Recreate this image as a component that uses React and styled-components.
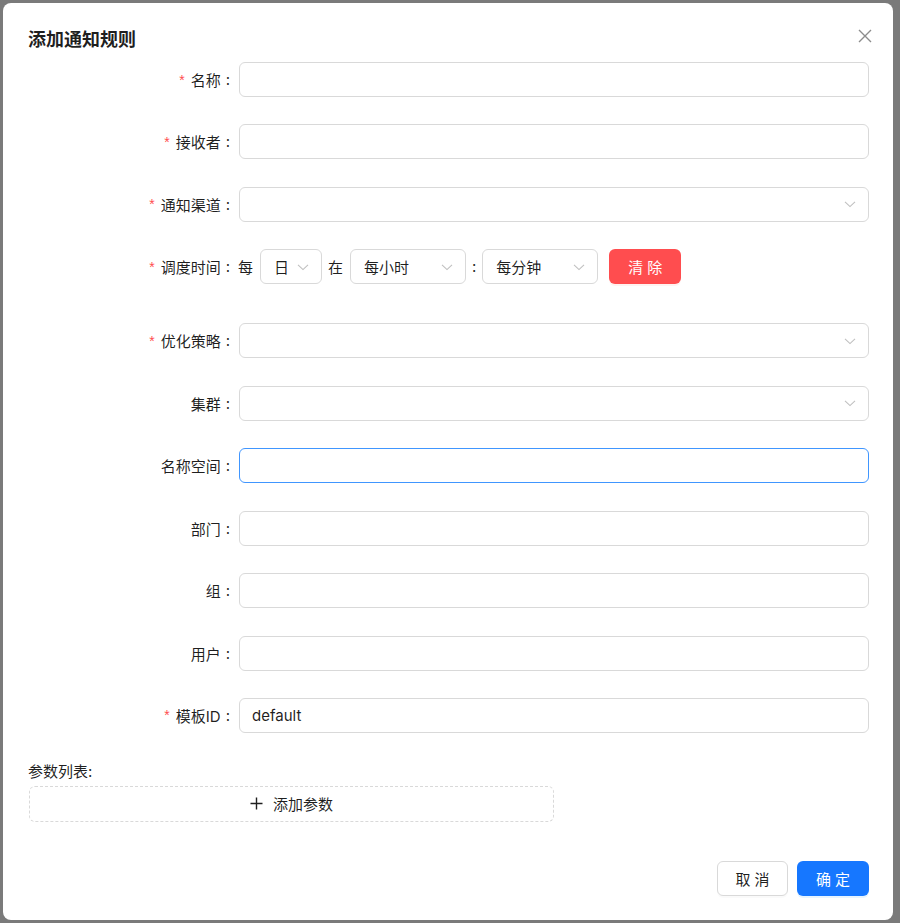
import styled, { createGlobalStyle } from 'styled-components';

const GlobalStyle = createGlobalStyle`
  html, body {
    margin: 0;
    padding: 0;
    background: #7a7a7a;
  }
  * {
    box-sizing: border-box;
  }
  body {
    font-family: "Inter", "Noto Sans CJK SC", sans-serif;
    font-size: 15px;
    color: rgba(0, 0, 0, 0.88);
  }
`;

const Backdrop = styled.div`
  width: 900px;
  height: 923px;
  padding: 3px 7px 3px 3px;
`;

const Modal = styled.div`
  position: relative;
  width: 890px;
  height: 917px;
  background: #fff;
  border-radius: 8px;
  padding: 24px 24px 24px 25px;
  display: flex;
  flex-direction: column;
`;

const Title = styled.h2`
  margin: 0 0 9px;
  font-size: 18px;
  line-height: 26px;
  font-weight: 700;
  color: rgba(0, 0, 0, 0.88);
`;

const Close = styled.button`
  position: absolute;
  top: 22px;
  right: 17px;
  width: 22px;
  height: 22px;
  padding: 0;
  border: none;
  background: transparent;
  display: flex;
  align-items: center;
  justify-content: center;
  color: rgba(0, 0, 0, 0.45);
`;

const Row = styled.div`
  display: flex;
  align-items: center;
  height: 35px;
  margin-bottom: ${p => p.$gap ?? 27.45}px;
`;

const Label = styled.label`
  width: 211px;
  flex-shrink: 0;
  display: flex;
  justify-content: flex-end;
  align-items: center;
  padding-right: 9px;
  white-space: nowrap;

  &::after {
    content: ":";
    margin-left: 5px;
  }
`;

const Star = styled.span`
  color: #ff4d4f;
  margin-right: 6px;
  font-size: 14px;
  font-family: "Liberation Sans", sans-serif;
`;

const Input = styled.div`
  flex: 1;
  height: 35px;
  border: 1px solid ${p => (p.$focus ? '#4096ff' : '#d9d9d9')};
  border-radius: 6px;
  padding: 0 12px;
  display: flex;
  align-items: center;
  background: #fff;
`;

const Select = styled.div`
  flex: ${p => (p.$width ? '0 0 auto' : 1)};
  width: ${p => (p.$width ? `${p.$width}px` : 'auto')};
  height: 35px;
  border: 1px solid #d9d9d9;
  border-radius: 6px;
  padding: 0 12px 0 13px;
  display: flex;
  align-items: center;
  justify-content: space-between;
  color: rgba(0, 0, 0, 0.88);
`;

const Arrow = styled.span`
  display: flex;
  color: rgba(0, 0, 0, 0.25);
`;

const Word = styled.span`
  margin: 0 ${p => p.$right ?? 6}px 0 ${p => p.$left ?? 6}px;
`;

const Button = styled.button`
  height: 35px;
  width: ${p => p.$width}px;
  border-radius: 6px;
  font-family: inherit;
  font-size: 15px;
  letter-spacing: 4px;
  text-indent: 4px;
  cursor: pointer;
  border: 1px solid ${p => (p.$kind === 'default' ? '#d9d9d9' : 'transparent')};
  background: ${p => (p.$kind === 'danger' ? '#ff4d4f' : p.$kind === 'primary' ? '#1677ff' : '#fff')};
  color: ${p => (p.$kind === 'default' ? 'rgba(0,0,0,0.88)' : '#fff')};
  box-shadow: ${p =>
    p.$kind === 'danger'
      ? '0 2px 0 rgba(255, 38, 5, 0.06)'
      : p.$kind === 'primary'
      ? '0 2px 0 rgba(5, 145, 255, 0.1)'
      : '0 2px 0 rgba(0, 0, 0, 0.02)'};
`;

const ParamLabel = styled.div`
  line-height: 22px;
  margin-bottom: 3px;
`;

const AddButton = styled.button`
  width: 525px;
  margin-left: 1px;
  height: 36px;
  border: 1px dashed #d9d9d9;
  border-radius: 6px;
  background: #fff;
  font-family: inherit;
  font-size: 15px;
  color: rgba(0, 0, 0, 0.88);
  display: flex;
  align-items: center;
  justify-content: center;
  gap: 10px;
`;

const Footer = styled.div`
  margin-top: auto;
  display: flex;
  justify-content: flex-end;
  gap: 9px;
`;

const Chevron = () => (
  <Arrow>
    <svg width="12" height="12" viewBox="0 0 12 12" fill="none">
      <path d="M1 3.8 L6 8.6 L11 3.8" stroke="currentColor" strokeWidth="1.1" />
    </svg>
  </Arrow>
);

const Field = ({ label, required, children, gap }) => (
  <Row $gap={gap}>
    <Label>
      {required && <Star>*</Star>}
      {label}
    </Label>
    {children}
  </Row>
);

const App = () => {
  return (
    <>
      <GlobalStyle />
      <Backdrop>
        <Modal>
          <Title>添加通知规则</Title>
          <Close>
            <svg width="14" height="14" viewBox="0 0 14 14" fill="none">
              <path d="M1 1 L13 13 M13 1 L1 13" stroke="currentColor" strokeWidth="1.4" />
            </svg>
          </Close>

          <Field label="名称" required><Input /></Field>
          <Field label="接收者" required><Input /></Field>
          <Field label="通知渠道" required>
            <Select><span /><Chevron /></Select>
          </Field>
          <Field label="调度时间" required gap={39}>
            <Word $left={-1} $right={7}>每</Word>
            <Select $width={62}><span>日</span><Chevron /></Select>
            <Word $left={6} $right={7}>在</Word>
            <Select $width={116}><span>每小时</span><Chevron /></Select>
            <Word $left={6} $right={6}>:</Word>
            <Select $width={116}><span>每分钟</span><Chevron /></Select>
            <Button $kind="danger" $width={72} style={{ marginLeft: 11 }}>清除</Button>
          </Field>
          <Field label="优化策略" required>
            <Select><span /><Chevron /></Select>
          </Field>
          <Field label="集群">
            <Select><span /><Chevron /></Select>
          </Field>
          <Field label="名称空间"><Input $focus /></Field>
          <Field label="部门"><Input /></Field>
          <Field label="组"><Input /></Field>
          <Field label="用户"><Input /></Field>
          <Field label="模板ID" required gap={28}><Input>default</Input></Field>

          <ParamLabel>参数列表:</ParamLabel>
          <AddButton>
            <svg width="13" height="13" viewBox="0 0 13 13" fill="none">
              <path d="M6.5 0.5 V12.5 M0.5 6.5 H12.5" stroke="currentColor" strokeWidth="1.4" />
            </svg>
            添加参数
          </AddButton>

          <Footer>
            <Button $kind="default" $width={71}>取消</Button>
            <Button $kind="primary" $width={72}>确定</Button>
          </Footer>
        </Modal>
      </Backdrop>
    </>
  );
};

export default App;
